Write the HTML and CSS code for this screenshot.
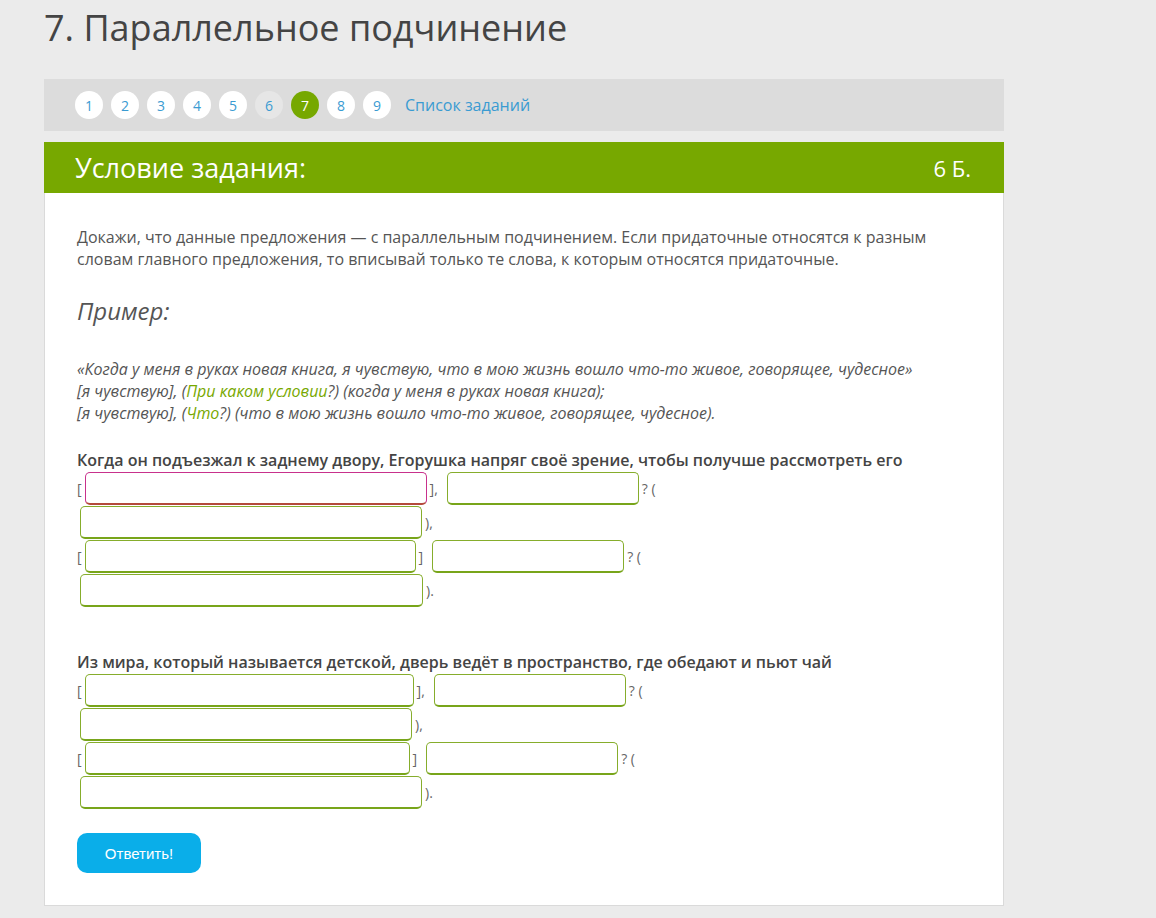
FILE: index.html
```html
<!DOCTYPE html>
<html lang="ru">
<head>
  <meta charset="UTF-8">
  <meta name="viewport" content="width=device-width, initial-scale=1.0">
  <link rel="stylesheet" href="styles.css">
  <title>Параллельное подчинение</title>
</head>
<body>
  <div class="page">
    <h1 class="title">7. Параллельное подчинение</h1>

    <div class="task-nav">
      <a class="num">1</a>
      <a class="num">2</a>
      <a class="num">3</a>
      <a class="num">4</a>
      <a class="num">5</a>
      <a class="num done">6</a>
      <a class="num current">7</a>
      <a class="num">8</a>
      <a class="num">9</a>
      <a class="list-link">Список заданий</a>
    </div>

    <div class="task">
      <div class="task-head">
        <span>Условие задания:</span>
        <span class="points">6 Б.</span>
      </div>

      <div class="task-body">
        <p class="intro">Докажи, что данные предложения — с параллельным подчинением. Если придаточные относятся к разным словам главного предложения, то вписывай только те слова, к которым относятся придаточные.</p>

        <h2 class="example-title">Пример:</h2>

        <p class="example">
          «Когда у меня в руках новая книга, я чувствую, что в мою жизнь вошло что-то живое, говорящее, чудесное»<br>
          [я чувствую], (<span class="hl">При каком условии</span>?) (когда у меня в руках новая книга);<br>
          [я чувствую], (<span class="hl">Что</span>?) (что в мою жизнь вошло что-то живое, говорящее, чудесное).
        </p>

        <!-- первое предложение -->
        <div class="question">
          <div class="q-text">Когда он подъезжал к заднему двору, Егорушка напряг своё зрение, чтобы получше рассмотреть его</div>
          <div class="row">[<input class="field w342 error" type="text"><span class="sep">],</span><input class="field w192" type="text"><span class="tail">? (</span></div>
          <div class="row"><input class="field w342" type="text"><span class="sep">),</span></div>
          <div class="row">[<input class="field w331" type="text"><span class="sep">]</span><input class="field w192" type="text"><span class="tail">? (</span></div>
          <div class="row"><input class="field w343" type="text"><span class="sep">).</span></div>
        </div>

        <!-- второе предложение -->
        <div class="question">
          <div class="q-text">Из мира, который называется детской, дверь ведёт в пространство, где обедают и пьют чай</div>
          <div class="row">[<input class="field w329" type="text"><span class="sep">],</span><input class="field w192" type="text"><span class="tail">? (</span></div>
          <div class="row"><input class="field w332" type="text"><span class="sep">),</span></div>
          <div class="row">[<input class="field w325" type="text"><span class="sep">]</span><input class="field w192" type="text"><span class="tail">? (</span></div>
          <div class="row"><input class="field w342" type="text"><span class="sep">).</span></div>
        </div>

        <button class="submit">Ответить!</button>
      </div>
    </div>
  </div>
</body>
</html>
```

FILE: styles.css
```css
body {
  margin: 0;
  background: #ebebeb;
  font-family: 'Open Sans', 'Liberation Sans', sans-serif;
  color: #555;
}

.page {
  width: 960px;
  margin-left: 44px;
}

.title {
  margin: 0;
  padding-top: 6px;
  height: 73px;
  font-size: 36px;
  font-weight: 400;
  color: #444;
  line-height: 44px;
}

.task-nav {
  display: flex;
  align-items: center;
  gap: 8px;
  height: 52px;
  padding-left: 31px;
  background: #dcdcdc;
}

.num {
  width: 28px;
  height: 28px;
  border-radius: 50%;
  background: #fff;
  color: #3a9bd2;
  font-size: 14px;
  display: flex;
  align-items: center;
  justify-content: center;
}

.num.done {
  background: #e6e6e6;
}

.num.current {
  background: #76a800;
  color: #fff;
}

.list-link {
  margin-left: 6px;
  color: #3a9bd2;
  font-size: 16px;
}

.task {
  margin-top: 11px;
  background: #fff;
  border: 1px solid #dadada;
}

.task-head {
  display: flex;
  justify-content: space-between;
  align-items: center;
  height: 51px;
  padding: 0 33px 0 31px;
  margin: -1px -1px 0;
  background: #77a800;
  color: #fff;
  font-size: 27px;
}

.task-head .points {
  font-size: 22px;
}

.task-body {
  padding: 33px 60px 32px 32px;
}

.intro {
  margin: 0;
  font-size: 16px;
  line-height: 22px;
}

.example-title {
  margin: 25px 0 0;
  font-size: 24px;
  font-style: italic;
  font-weight: 400;
  line-height: 32px;
}

.example {
  margin: 31px 0 0;
  font-size: 16px;
  font-style: italic;
  line-height: 22px;
}

.hl {
  color: #77a800;
}

.question {
  margin-top: 25px;
}

.question + .question {
  margin-top: 44px;
}

.q-text {
  font-size: 16px;
  font-weight: 600;
  color: #444;
  line-height: 22px;
}

.row {
  display: flex;
  align-items: center;
  height: 34px;
  font-size: 14px;
  color: #666;
}

.field {
  box-sizing: border-box;
  height: 33px;
  margin: 0 0 0 3px;
  border: 1px solid #86ad2c;
  border-bottom: 2px solid #78a51a;
  border-radius: 5px;
  background: #fff;
}

.field.error {
  border-color: #c8318c;
  border-bottom-color: #b44a3c;
}

.sep {
  margin: 0 6px 0 3px;
}

.tail {
  margin-left: 3px;
}

.w192 { width: 192px; }
.w325 { width: 325px; }
.w329 { width: 329px; }
.w331 { width: 331px; }
.w332 { width: 332px; }
.w342 { width: 342px; }
.w343 { width: 343px; }

.submit {
  margin-top: 24px;
  width: 124px;
  height: 40px;
  border: none;
  border-radius: 10px;
  background: #0aaee9;
  color: #fff;
  font-family: 'Liberation Sans', Arial, sans-serif;
  font-size: 15px;
  cursor: pointer;
}
```
